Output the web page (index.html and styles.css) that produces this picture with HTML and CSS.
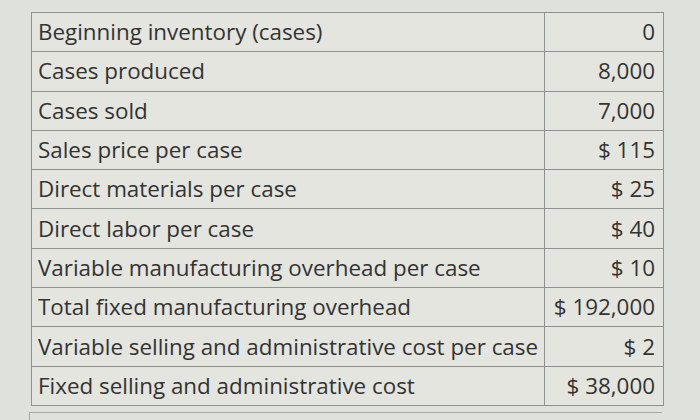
FILE: index.html
```html
<!DOCTYPE html>
<html>
<head>
<meta charset="utf-8">
<link rel="stylesheet" href="styles.css">
</head>
<body>
<div class="page">
  <table class="data">
    <colgroup><col class="col-label"><col class="col-value"></colgroup>
    <tr><td class="label">Beginning inventory (cases)</td><td class="value">0</td></tr>
    <tr><td class="label">Cases produced</td><td class="value">8,000</td></tr>
    <tr><td class="label">Cases sold</td><td class="value">7,000</td></tr>
    <tr><td class="label">Sales price per case</td><td class="value">$ 115</td></tr>
    <tr><td class="label">Direct materials per case</td><td class="value">$ 25</td></tr>
    <tr><td class="label">Direct labor per case</td><td class="value">$ 40</td></tr>
    <tr><td class="label">Variable manufacturing overhead per case</td><td class="value">$ 10</td></tr>
    <tr><td class="label">Total fixed manufacturing overhead</td><td class="value">$ 192,000</td></tr>
    <tr><td class="label">Variable selling and administrative cost per case</td><td class="value">$ 2</td></tr>
    <tr><td class="label">Fixed selling and administrative cost</td><td class="value">$ 38,000</td></tr>
  </table>
  <div class="next"></div>
</div>
</body>
</html>
```
FILE: styles.css
```css
html, body {
  margin: 0;
  padding: 0;
}
body {
  width: 700px;
  height: 420px;
  overflow: hidden;
  background: #dfe2dc;
  font-family: "Open Sans", "Liberation Sans", sans-serif;
  color: #333333;
}
.page {
  padding: 12px 0 0 31px;
}
.data {
  border-collapse: collapse;
  table-layout: fixed;
  width: 632px;
  background: #e4e5df;
}
.col-label {
  width: 513px;
}
.col-value {
  width: 119px;
}
.data td {
  border: 1px solid #8e938f;
  height: 38.3px;
  padding: 0 8px;
  font-size: 22.4px;
  line-height: 38px;
  white-space: nowrap;
  overflow: visible;
}
.data .label {
  padding-left: 6px;
  padding-right: 4px;
}
.data .value {
  text-align: right;
}
.next {
  margin-top: 6px;
  margin-left: -2px;
  width: 632px;
  height: 10px;
  border-top: 1px solid #a3a8a3;
  border-left: 1px solid #a3a8a3;
}
```
